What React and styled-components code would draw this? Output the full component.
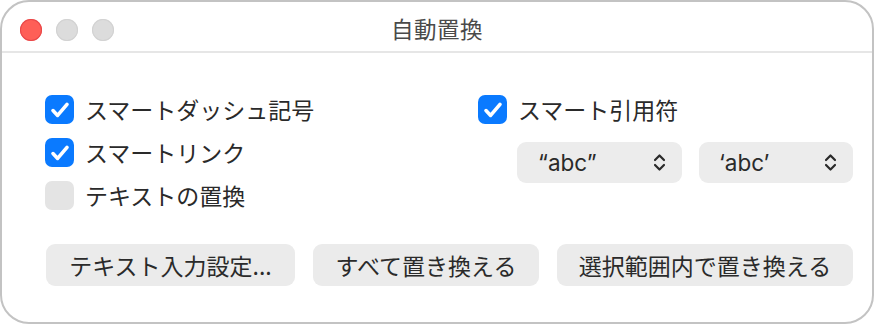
import React, { useState } from "react";
import styled, { createGlobalStyle } from "styled-components";

const Global = createGlobalStyle`
  html, body {
    margin: 0;
    padding: 0;
    background: #ffffff;
  }
  body {
    font-family: "Noto Sans CJK JP", "Noto Sans", sans-serif;
    -webkit-font-smoothing: antialiased;
  }
`;

const Window = styled.div`
  box-sizing: border-box;
  width: 874px;
  height: 324px;
  border: 2px solid #c3c3c3;
  border-radius: 29px;
  background: #ffffff;
  overflow: hidden;
  display: flex;
  flex-direction: column;
`;

const TitleBar = styled.div`
  position: relative;
  height: 49px;
  border-bottom: 2px solid #e6e6e6;
  display: flex;
  align-items: center;
  justify-content: center;
`;

const Lights = styled.div`
  position: absolute;
  left: 18px;
  top: 17px;
  display: flex;
  gap: 14px;
`;

const Light = styled.span`
  width: 22px;
  height: 22px;
  border-radius: 50%;
  background: ${(p) => (p.$red ? "#fe5f57" : "#dcdcdc")};
  box-shadow: inset 0 0 0 1px ${(p) => (p.$red ? "#e8484a" : "#d2d2d2")};
`;

const Title = styled.div`
  font-size: 22.5px;
  color: #4a4a4a;
  letter-spacing: 0.5px;
  margin-top: 3px;
`;

const Body = styled.div`
  padding: 42px 0 0 43px;
  display: flex;
  flex-direction: column;
`;

const Top = styled.div`
  display: flex;
`;

const LeftCol = styled.div`
  width: 433px;
  display: flex;
  flex-direction: column;
  gap: 14px;
`;

const RightCol = styled.div`
  display: flex;
  flex-direction: column;
  gap: 18px;
`;

const Row = styled.label`
  display: flex;
  align-items: center;
  gap: 11px;
  height: 29px;
  font-size: 23px;
  color: #2a2a2a;
  cursor: default;
  user-select: none;
`;

const Box = styled.span`
  box-sizing: border-box;
  width: 29px;
  height: 29px;
  border-radius: 7px;
  background: ${(p) => (p.$on ? "#0a7aff" : "#e4e4e4")};
  display: flex;
  align-items: center;
  justify-content: center;
  flex-shrink: 0;
`;

const Label = styled.span`
  margin-top: -1px;
`;

const Popups = styled.div`
  display: flex;
  gap: 17px;
  padding-left: 39px;
`;

const Popup = styled.div`
  box-sizing: border-box;
  width: ${(p) => p.$w}px;
  height: 41px;
  border-radius: 9px;
  background: #ececec;
  display: flex;
  align-items: center;
  justify-content: space-between;
  padding: 0 16px 0 ${(p) => p.$pl}px;
  font-family: "Inter", "Noto Sans", sans-serif;
  font-size: 22.5px;
  color: #2a2a2a;
`;

const Buttons = styled.div`
  display: flex;
  gap: 18px;
  margin-top: 34px;
  margin-left: 1px;
`;

const Button = styled.button`
  box-sizing: border-box;
  width: ${(p) => p.$w}px;
  height: 42px;
  border: none;
  border-radius: 9px;
  background: #ebebeb;
  font-family: "Noto Sans CJK JP", "Noto Sans", sans-serif;
  font-size: 23px;
  color: #2a2a2a;
  padding: 0;
  display: flex;
  align-items: center;
  justify-content: center;
`;

const Check = () => (
  <svg width="20" height="18" viewBox="0 0 20 18">
    <path
      d="M3 9.6 L7.6 14.4 L17 3.4"
      fill="none"
      stroke="#fff"
      strokeWidth="3.6"
      strokeLinecap="round"
      strokeLinejoin="round"
    />
  </svg>
);

const Chevrons = () => (
  <svg width="13" height="19" viewBox="0 0 13 19">
    <path
      d="M2 7 L6.5 2.5 L11 7 M2 12 L6.5 16.5 L11 12"
      fill="none"
      stroke="#2a2a2a"
      strokeWidth="2.2"
      strokeLinecap="round"
      strokeLinejoin="round"
    />
  </svg>
);

const Checkbox = ({ checked, onToggle, children }) => (
  <Row onClick={onToggle}>
    <Box $on={checked}>{checked && <Check />}</Box>
    <Label>{children}</Label>
  </Row>
);

export default function App() {
  const [opts, setOpts] = useState({
    dash: true,
    link: true,
    text: false,
    quote: true,
  });
  const toggle = (k) => () => setOpts({ ...opts, [k]: !opts[k] });

  return (
    <>
      <Global />
      <Window>
        <TitleBar>
          <Lights>
            <Light $red />
            <Light />
            <Light />
          </Lights>
          <Title>自動置換</Title>
        </TitleBar>
        <Body>
          <Top>
            <LeftCol>
              <Checkbox checked={opts.dash} onToggle={toggle("dash")}>
                スマートダッシュ記号
              </Checkbox>
              <Checkbox checked={opts.link} onToggle={toggle("link")}>
                スマートリンク
              </Checkbox>
              <Checkbox checked={opts.text} onToggle={toggle("text")}>
                テキストの置換
              </Checkbox>
            </LeftCol>
            <RightCol>
              <Checkbox checked={opts.quote} onToggle={toggle("quote")}>
                スマート引用符
              </Checkbox>
              <Popups>
                <Popup $w={165} $pl={21}>
                  <span>“abc”</span>
                  <Chevrons />
                </Popup>
                <Popup $w={154} $pl={20}>
                  <span>‘abc’</span>
                  <Chevrons />
                </Popup>
              </Popups>
            </RightCol>
          </Top>
          <Buttons>
            <Button $w={249}>テキスト入力設定...</Button>
            <Button $w={226}>すべて置き換える</Button>
            <Button $w={296}>選択範囲内で置き換える</Button>
          </Buttons>
        </Body>
      </Window>
    </>
  );
}
